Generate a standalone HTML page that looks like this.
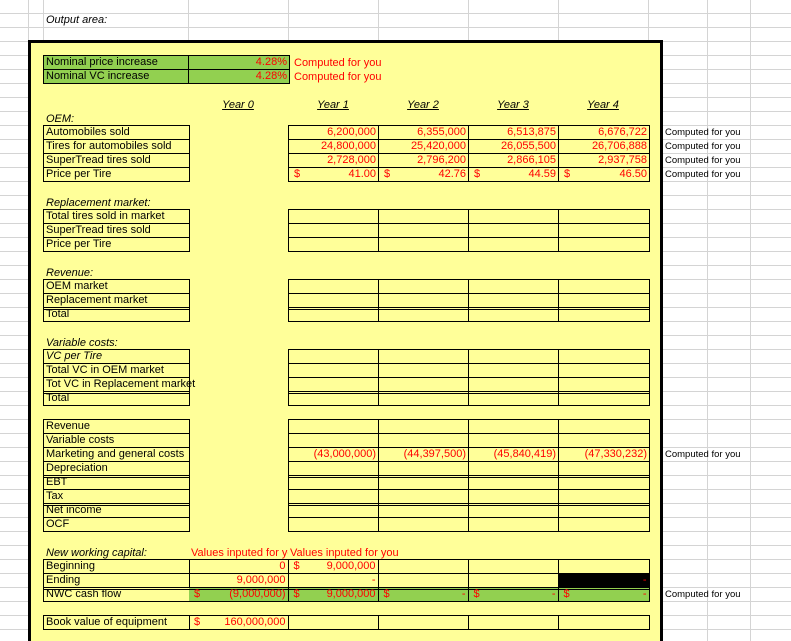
<!DOCTYPE html>
<html><head><meta charset="utf-8"><style>
*{margin:0;padding:0;box-sizing:border-box}
html{width:791px;height:641px;overflow:hidden}
body{width:791px;height:641px;overflow:hidden;position:relative;background:#fff;font-family:"Liberation Sans",Arial,sans-serif;font-size:11px;
background-image:linear-gradient(#d4d4d4 1px,transparent 1px);background-size:100% 14px;background-position:0 13px}
.v{position:absolute;top:0;height:641px;width:1px;background:#d4d4d4}
#box{position:absolute;left:28px;top:40px;width:635px;height:601px;background:#ffff99;border:3px solid #000;border-bottom:none}
.t{position:absolute;text-align:left;color:#000;white-space:nowrap;line-height:14px}
table{position:absolute;border-collapse:collapse;table-layout:fixed}
td{border:1px solid #000;height:14px;line-height:13px;padding:0 2px;white-space:nowrap;overflow:hidden;font-size:11px;vertical-align:bottom}
td.r{text-align:right;color:#f00}
td.g{background:#92d050}
td.dt{box-shadow:inset 0 1px 0 #ffff99,inset 0 2px 0 #000}
td.g.dt{box-shadow:inset 0 1px 0 #92d050,inset 0 2px 0 #000}
td.k{background:#000}
table.nl td:first-child{border-left:none}
.d{float:left;color:#f00;padding-left:3px}
i{font-style:italic}
.y{position:absolute;top:99px;font-style:italic;text-decoration:underline;width:90px;text-align:center}
.c{position:absolute;left:665px;font-size:9.5px;line-height:14px}
.red{color:#f00}
</style></head><body>
<div class="v" style="left:28px"></div><div class="v" style="left:43px"></div><div class="v" style="left:188px"></div><div class="v" style="left:288px"></div><div class="v" style="left:378px"></div><div class="v" style="left:468px"></div><div class="v" style="left:558px"></div><div class="v" style="left:648px"></div><div class="v" style="left:707px"></div><div class="v" style="left:750px"></div>
<div class="t" style="left:46px;top:13px"><i>Output area:</i></div>
<div id="box"></div>

<table style="left:43px;top:55px;width:246px"><col style="width:145px"><col style="width:101px">
<tr><td class="g">Nominal price increase</td><td class="g r">4.28%</td></tr>
<tr><td class="g">Nominal VC increase</td><td class="g r">4.28%</td></tr></table>
<div class="t red" style="left:294px;top:56px">Computed for you</div>
<div class="t red" style="left:294px;top:70px">Computed for you</div>

<div class="y" style="left:193px">Year 0</div>
<div class="y" style="left:288px">Year 1</div>
<div class="y" style="left:378px">Year 2</div>
<div class="y" style="left:468px">Year 3</div>
<div class="y" style="left:558px">Year 4</div>

<div class="t" style="left:46px;top:112px"><i>OEM:</i></div>
<table style="left:43px;top:125px;width:146px"><col style="width:146px">
<tr><td>Automobiles sold</td></tr><tr><td>Tires for automobiles sold</td></tr><tr><td>SuperTread tires sold</td></tr><tr><td>Price per Tire</td></tr></table>
<table style="left:288px;top:125px;width:361px"><col style="width:90px"><col style="width:90px"><col style="width:90px"><col style="width:91px">
<tr><td class="r">6,200,000</td><td class="r">6,355,000</td><td class="r">6,513,875</td><td class="r">6,676,722</td></tr>
<tr><td class="r">24,800,000</td><td class="r">25,420,000</td><td class="r">26,055,500</td><td class="r">26,706,888</td></tr>
<tr><td class="r">2,728,000</td><td class="r">2,796,200</td><td class="r">2,866,105</td><td class="r">2,937,758</td></tr>
<tr><td class="r"><span class="d">$</span>41.00</td><td class="r"><span class="d">$</span>42.76</td><td class="r"><span class="d">$</span>44.59</td><td class="r"><span class="d">$</span>46.50</td></tr></table>
<div class="c" style="top:126px">Computed for you</div>
<div class="c" style="top:140px">Computed for you</div>
<div class="c" style="top:154px">Computed for you</div>
<div class="c" style="top:168px">Computed for you</div>

<div class="t" style="left:46px;top:196px"><i>Replacement market:</i></div>
<table style="left:43px;top:209px;width:146px"><col style="width:146px">
<tr><td>Total tires sold in market</td></tr><tr><td>SuperTread tires sold</td></tr><tr><td>Price per Tire</td></tr></table>
<table style="left:288px;top:209px;width:361px"><col style="width:90px"><col style="width:90px"><col style="width:90px"><col style="width:91px">
<tr><td></td><td></td><td></td><td></td></tr><tr><td></td><td></td><td></td><td></td></tr><tr><td></td><td></td><td></td><td></td></tr></table>

<div class="t" style="left:46px;top:266px"><i>Revenue:</i></div>
<table style="left:43px;top:279px;width:146px"><col style="width:146px">
<tr><td>OEM market</td></tr><tr><td>Replacement market</td></tr><tr><td class="dt">Total</td></tr></table>
<table style="left:288px;top:279px;width:361px"><col style="width:90px"><col style="width:90px"><col style="width:90px"><col style="width:91px">
<tr><td></td><td></td><td></td><td></td></tr><tr><td></td><td></td><td></td><td></td></tr><tr><td class="dt"></td><td class="dt"></td><td class="dt"></td><td class="dt"></td></tr></table>

<div class="t" style="left:46px;top:336px"><i>Variable costs:</i></div>
<table style="left:43px;top:349px;width:146px"><col style="width:146px">
<tr><td><i>VC per Tire</i></td></tr><tr><td>Total VC in OEM market</td></tr><tr><td style="overflow:visible">Tot VC in Replacement market</td></tr><tr><td class="dt">Total</td></tr></table>
<table style="left:288px;top:349px;width:361px"><col style="width:90px"><col style="width:90px"><col style="width:90px"><col style="width:91px">
<tr><td></td><td></td><td></td><td></td></tr><tr><td></td><td></td><td></td><td></td></tr><tr><td></td><td></td><td></td><td></td></tr><tr><td class="dt"></td><td class="dt"></td><td class="dt"></td><td class="dt"></td></tr></table>

<table style="left:43px;top:419px;width:146px"><col style="width:146px">
<tr><td>Revenue</td></tr><tr><td>Variable costs</td></tr><tr><td>Marketing and general costs</td></tr><tr><td>Depreciation</td></tr><tr><td class="dt">EBT</td></tr><tr><td>Tax</td></tr><tr><td class="dt">Net income</td></tr><tr><td>OCF</td></tr></table>
<table style="left:288px;top:419px;width:361px"><col style="width:90px"><col style="width:90px"><col style="width:90px"><col style="width:91px">
<tr><td></td><td></td><td></td><td></td></tr><tr><td></td><td></td><td></td><td></td></tr>
<tr><td class="r">(43,000,000)</td><td class="r">(44,397,500)</td><td class="r">(45,840,419)</td><td class="r">(47,330,232)</td></tr>
<tr><td></td><td></td><td></td><td></td></tr>
<tr><td class="dt"></td><td class="dt"></td><td class="dt"></td><td class="dt"></td></tr><tr><td></td><td></td><td></td><td></td></tr>
<tr><td class="dt"></td><td class="dt"></td><td class="dt"></td><td class="dt"></td></tr><tr><td></td><td></td><td></td><td></td></tr></table>
<div class="c" style="top:448px">Computed for you</div>

<div class="t" style="left:46px;top:546px"><i>New working capital:</i></div>
<div class="t red" style="left:191px;top:546px;width:97px;overflow:hidden">Values inputed for you</div>
<div class="t red" style="left:290px;top:546px">Values inputed for you</div>
<table style="left:43px;top:559px;width:146px"><col style="width:146px">
<tr><td>Beginning</td></tr><tr><td>Ending</td></tr><tr><td class="dt">NWC cash flow</td></tr></table>
<table class="nl" style="left:189px;top:559px;width:460px"><col style="width:99px"><col style="width:90px"><col style="width:90px"><col style="width:90px"><col style="width:91px">
<tr><td class="r">0</td><td class="r"><span class="d">$</span>9,000,000</td><td></td><td></td><td></td></tr>
<tr><td class="r">9,000,000</td><td class="r">-</td><td></td><td></td><td class="r k">-</td></tr>
<tr><td class="r g dt"><span class="d">$</span>(9,000,000)</td><td class="r g dt"><span class="d">$</span>9,000,000</td><td class="r g dt"><span class="d">$</span>-</td><td class="r g dt"><span class="d">$</span>-</td><td class="r g dt"><span class="d">$</span>-</td></tr></table>
<div class="c" style="top:588px">Computed for you</div>

<table style="left:43px;top:615px;width:146px"><col style="width:146px"><tr><td>Book value of equipment</td></tr></table>
<table class="nl" style="left:189px;top:615px;width:460px"><col style="width:99px"><col style="width:90px"><col style="width:90px"><col style="width:90px"><col style="width:91px">
<tr><td class="r"><span class="d">$</span>160,000,000</td><td></td><td></td><td></td><td></td></tr></table>
</body></html>
